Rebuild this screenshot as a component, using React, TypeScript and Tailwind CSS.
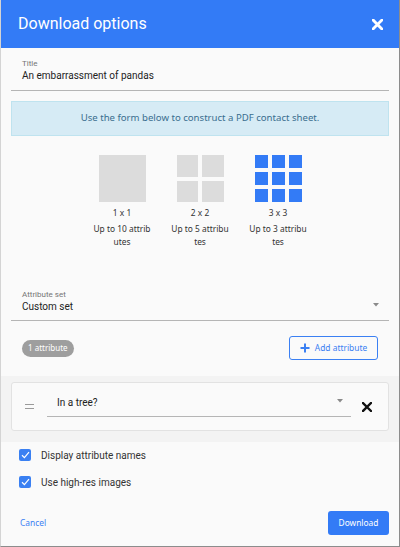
import { useState } from 'react'

const roboto = { fontFamily: 'Roboto, "Liberation Sans", sans-serif' }
const noto = { fontFamily: '"Noto Sans", "Open Sans", sans-serif' }

function Caret() {
  return (
    <svg width="6" height="4" viewBox="0 0 6 4" className="shrink-0">
      <path d="M0 0 H6 L3 3.5 Z" fill="#8a8a8a" />
    </svg>
  )
}

function Cross({ size, color, stroke }: { size: number; color: string; stroke: number }) {
  return (
    <svg width={size} height={size} viewBox="0 0 10 10">
      <path d="M1 1 L9 9 M9 1 L1 9" stroke={color} strokeWidth={stroke} strokeLinecap="square" />
    </svg>
  )
}

function Check({ checked, onClick }: { checked: boolean; onClick: () => void }) {
  return (
    <button
      onClick={onClick}
      className={`w-[12px] h-[12px] rounded-[2px] flex items-center justify-center shrink-0 ${checked ? 'bg-[#3a80f2]' : 'border border-[#888] bg-white'}`}
    >
      {checked && (
        <svg width="9" height="8" viewBox="0 0 9 8">
          <path d="M1 4.3 L3.4 6.6 L8 1.2" stroke="white" strokeWidth="1.2" fill="none" />
        </svg>
      )}
    </button>
  )
}

const layouts = [
  { id: 1, label: '1 x 1', note: ['Up to 10 attrib', 'utes'] },
  { id: 2, label: '2 x 2', note: ['Up to 5 attribu', 'tes'] },
  { id: 3, label: '3 x 3', note: ['Up to 3 attribu', 'tes'] },
]

function LayoutIcon({ n, active }: { n: number; active: boolean }) {
  const color = active ? 'bg-[#337bf6]' : 'bg-[#dcdcdc]'
  const cells = Array.from({ length: n * n })
  const gridClass = n === 1 ? 'grid-cols-1' : n === 2 ? 'grid-cols-2 gap-[4px]' : 'grid-cols-3 gap-[4px]'
  return (
    <div className={`grid ${gridClass} w-[47px] h-[47px]`}>
      {cells.map((_, i) => (
        <div key={i} className={color} />
      ))}
    </div>
  )
}

export default function App() {
  const [layout, setLayout] = useState(3)
  const [names, setNames] = useState(true)
  const [hires, setHires] = useState(true)

  return (
    <div className="w-[400px] h-[547px] bg-[#fafafa] border-r border-b border-l border-r-[#8c8c8c] border-b-[#8c8c8c] border-l-[#d4d4d4] flex flex-col overflow-hidden">
      {/* Header */}
      <div className="h-[48px] bg-[#337bf6] flex items-center justify-between pl-[17px] pr-[15px] shrink-0">
        <h1 className="text-white text-[16px] leading-none" style={roboto}>
          Download options
        </h1>
        <button className="p-[1px]">
          <Cross size={11} color="white" stroke={2.6} />
        </button>
      </div>

      {/* Title */}
      <div className="px-[10px] mt-[11px]">
        <div className="border-b border-[#b5b5b5] px-[11px] pb-[7px]" style={roboto}>
          <p className="text-[8px] leading-[10px] text-[#757575]">Title</p>
          <p className="text-[10px] leading-[14px] text-[#222]">An embarrassment of pandas</p>
        </div>
      </div>

      {/* Info */}
      <div className="px-[10px] mt-[10px]">
        <div
          className="h-[35px] border border-[#bfe3ef] bg-[#d6ebf5] flex items-center justify-center text-[9.6px] text-[#3a6e8f]"
          style={noto}
        >
          Use the form below to construct a PDF contact sheet.
        </div>
      </div>

      {/* Layout options */}
      <div className="flex justify-center gap-[22px] mt-[19px]" style={noto}>
        {layouts.map((l) => (
          <button key={l.id} onClick={() => setLayout(l.id)} className="w-[56px] flex flex-col items-center">
            <LayoutIcon n={l.id} active={layout === l.id} />
            <span className="mt-[4px] text-[8.4px] leading-[13px] text-[#333]">{l.label}</span>
            <span className="mt-[3px] flex flex-col items-center text-[8.4px] leading-[13px] text-[#333] whitespace-nowrap">
              <span>{l.note[0]}</span>
              <span>{l.note[1]}</span>
            </span>
          </button>
        ))}
      </div>

      {/* Attribute set */}
      <div className="px-[10px] mt-[42px]">
        <div className="border-b border-[#b5b5b5] pl-[11px] pr-[10px] pb-[6px] flex items-end" style={roboto}>
          <div className="flex-1">
            <p className="text-[8px] leading-[10px] text-[#757575]">Attribute set</p>
            <p className="text-[10px] leading-[14px] text-[#222]">Custom set</p>
          </div>
          <div className="pb-[7px]">
            <Caret />
          </div>
        </div>
      </div>

      {/* Count + add */}
      <div className="flex items-center justify-between pl-[21px] pr-[21px] mt-[15px]" style={noto}>
        <span className="h-[17px] px-[6px] rounded-full bg-[#9e9e9e] text-white text-[8px] flex items-center">
          1 attribute
        </span>
        <button className="h-[24px] w-[89px] border border-[#3b80f3] rounded-[3px] flex items-center justify-center gap-[5px] text-[#3b80f3] text-[8.4px]">
          <svg width="10" height="10" viewBox="0 0 10 10">
            <path d="M5 0.5 V9.5 M0.5 5 H9.5" stroke="#3b80f3" strokeWidth="2" />
          </svg>
          Add attribute
        </button>
      </div>

      {/* Attribute list */}
      <div className="bg-[#f3f3f3] mt-[16px] pt-[6px] pb-[11px] px-[10px]">
        <div className="h-[49px] bg-[#fafafa] border border-[#e2e2e2] rounded-[3px] flex items-center pl-[13px] pr-[16px]">
          <div className="flex flex-col gap-[2.5px] w-[9px] shrink-0">
            <div className="h-[1.5px] bg-[#9a9a9a]" />
            <div className="h-[1.5px] bg-[#9a9a9a]" />
          </div>
          <div className="ml-[13px] flex-1 border-b border-[#b5b5b5] pl-[10px] pr-[8px] pb-[6px] flex items-start" style={roboto}>
            <span className="flex-1 text-[10px] leading-[14px] text-[#222]">In a tree?</span>
            <div className="pt-[3px]">
              <Caret />
            </div>
          </div>
          <button className="ml-[11px]">
            <Cross size={10} color="#111" stroke={2.4} />
          </button>
        </div>
      </div>

      {/* Options */}
      <div className="flex flex-col gap-[15px] pl-[18px] mt-[7px]" style={roboto}>
        <label className="flex items-center gap-[10px] h-[12px]">
          <Check checked={names} onClick={() => setNames(!names)} />
          <span className="text-[10px] text-[#333]">Display attribute names</span>
        </label>
        <label className="flex items-center gap-[10px] h-[12px]">
          <Check checked={hires} onClick={() => setHires(!hires)} />
          <span className="text-[10px] text-[#333]">Use high-res images</span>
        </label>
      </div>

      {/* Footer */}
      <div className="flex items-center justify-between pl-[19px] pr-[10px] mt-[23px]" style={noto}>
        <button className="text-[8.4px] text-[#3b80f3]">Cancel</button>
        <button className="h-[24px] w-[61px] rounded-[3px] bg-[#337bf6] text-white text-[8.4px]">Download</button>
      </div>
    </div>
  )
}
